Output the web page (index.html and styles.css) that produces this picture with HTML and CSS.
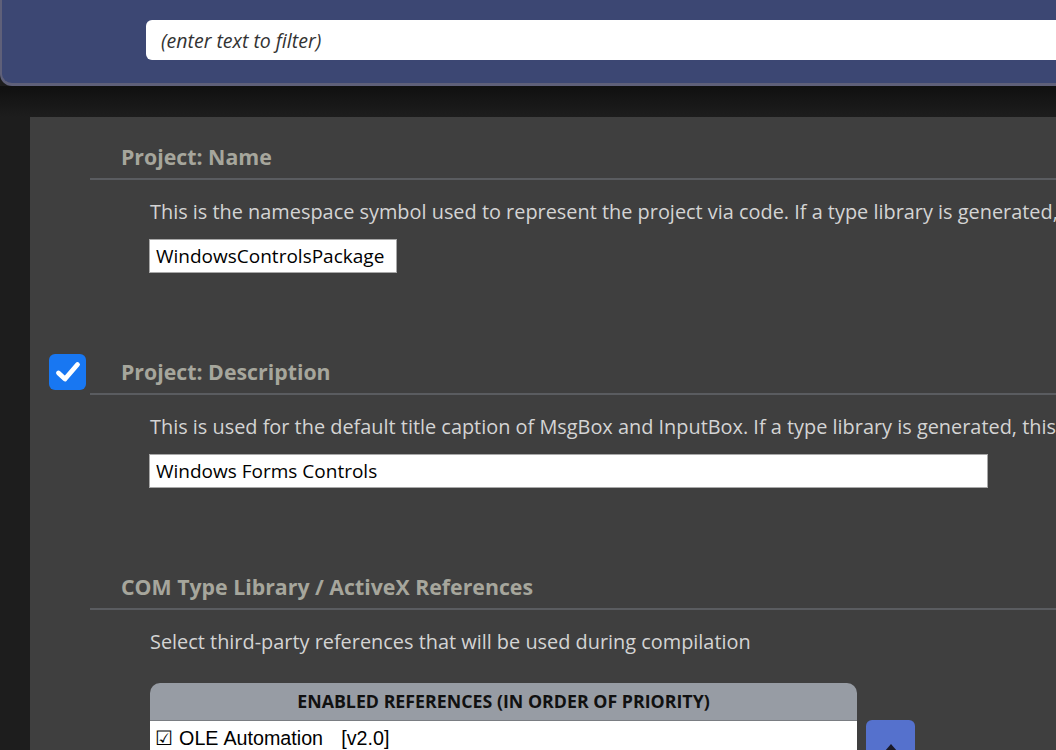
FILE: index.html
```html
<!DOCTYPE html>
<html>
<head>
<meta charset="utf-8">
<link rel="stylesheet" href="styles.css">
</head>
<body>
<header class="topbar">
  <div class="filter"><span class="filter-ph">(enter text to filter)</span></div>
</header>
<div class="shade"></div>
<main class="panel">
  <section class="sect">
    <div class="gutter"></div>
    <div class="sect-body">
      <h2 class="sect-title">Project: Name</h2>
      <p class="sect-desc">This is the namespace symbol used to represent the project via code. If a type library is generated, this will be the library name.</p>
      <div class="field field-short">WindowsControlsPackage</div>
    </div>
  </section>
  <section class="sect">
    <div class="gutter">
      <div class="check">
        <svg width="26" height="22" viewBox="0 0 26 22"><path d="M3.5 12 L10 18 L22.5 3.5" fill="none" stroke="#fff" stroke-width="4.8" stroke-linecap="round" stroke-linejoin="round"/></svg>
      </div>
    </div>
    <div class="sect-body">
      <h2 class="sect-title">Project: Description</h2>
      <p class="sect-desc">This is used for the default title caption of MsgBox and InputBox. If a type library is generated, this will be the library description.</p>
      <div class="field field-long">Windows Forms Controls</div>
    </div>
  </section>
  <section class="sect">
    <div class="gutter"></div>
    <div class="sect-body">
      <h2 class="sect-title">COM Type Library / ActiveX References</h2>
      <p class="sect-desc sect-desc-fit">Select third-party references that will be used during compilation</p>
      <div class="refs">
        <div class="ref-table">
          <div class="ref-head">ENABLED REFERENCES (IN ORDER OF PRIORITY)</div>
          <div class="ref-row">☑ OLE Automation &nbsp;&nbsp;[v2.0]</div>
        </div>
        <div class="ref-btns">
          <div class="btn-move"><span class="btn-arrow"></span></div>
        </div>
      </div>
    </div>
  </section>
</main>
</body>
</html>
```
FILE: styles.css
```css
html, body {
  margin: 0;
  padding: 0;
}
body {
  background: #1d1d1d;
  width: 1056px;
  height: 750px;
  overflow: hidden;
  font-family: "Open Sans", "Noto Sans", sans-serif;
}
.topbar {
  box-sizing: border-box;
  height: 86px;
  width: 1080px;
  background: #3c4773;
  border-left: 2px solid #5f6079;
  border-bottom: 3px solid #5f6079;
  border-bottom-left-radius: 12px;
  padding: 20px 0 0 144px;
}
.filter {
  height: 40px;
  background: #fff;
  border-radius: 6px;
  display: flex;
  align-items: center;
  padding-left: 15px;
}
.filter-ph {
  font-style: italic;
  font-size: 19.5px;
  color: #333;
}
.shade {
  height: 31px;
  background: linear-gradient(#101010, #1d1d1d);
}
.panel {
  margin-left: 30px;
  background: #3f3f3f;
  padding-top: 26px;
  height: 700px;
  display: flex;
  flex-direction: column;
  gap: 85px;
  overflow: hidden;
}
.sect {
  display: flex;
}
.gutter {
  width: 60px;
  flex: none;
  box-sizing: border-box;
  padding-left: 19px;
}
.check {
  width: 37px;
  height: 36px;
  margin-top: -4px;
  background: #1877f2;
  border-radius: 6px;
  display: flex;
  align-items: center;
  justify-content: center;
}
.sect-body {
  flex: 1;
  min-width: 0;
}
.sect-title {
  margin: 0;
  font-size: 21.3px;
  line-height: 28px;
  font-weight: 700;
  color: #a6a69c;
  padding: 0 0 7px 31px;
  border-bottom: 2px solid #5a5c60;
  white-space: nowrap;
}
.sect-desc {
  margin: 20px 0 0 0;
  padding-left: 60px;
  font-size: 19.9px;
  line-height: 24px;
  color: #d4d4d4;
  white-space: nowrap;
  overflow: hidden;
}
.sect-desc-fit {
  overflow: visible;
}
.field {
  margin: 15px 0 0 59px;
  box-sizing: border-box;
  height: 34px;
  background: #fff;
  border: 1px solid #a8a8a8;
  padding-left: 6px;
  font-size: 19px;
  line-height: 32px;
  color: #000;
}
.field-short { width: 248px; }
.field-long { width: 839px; }
.refs {
  margin: 29px 0 0 60px;
  display: flex;
  gap: 9px;
}
.ref-table {
  width: 707px;
  flex: none;
}
.ref-head {
  height: 37px;
  background: #979ca4;
  border-top-left-radius: 10px;
  border-top-right-radius: 10px;
  border-bottom: 1px solid #7a7d82;
  text-align: center;
  font-weight: 700;
  font-size: 17.8px;
  line-height: 37px;
  color: #111;
}
.ref-row {
  background: #fff;
  height: 40px;
  padding-left: 5px;
  font-family: "Liberation Sans", Arial, sans-serif;
  font-size: 19.7px;
  line-height: 34px;
  word-spacing: 0.6px;
  color: #000;
}
.ref-btns {
  padding-top: 37px;
}
.btn-move {
  width: 49px;
  height: 48px;
  background: #5571cd;
  border-radius: 6px;
  display: flex;
  justify-content: center;
  align-items: flex-start;
}
.btn-arrow {
  width: 0;
  height: 0;
  border-left: 6px solid transparent;
  border-right: 6px solid transparent;
  border-bottom: 7px solid #1a1a2a;
  margin-top: 24px;
}
```
